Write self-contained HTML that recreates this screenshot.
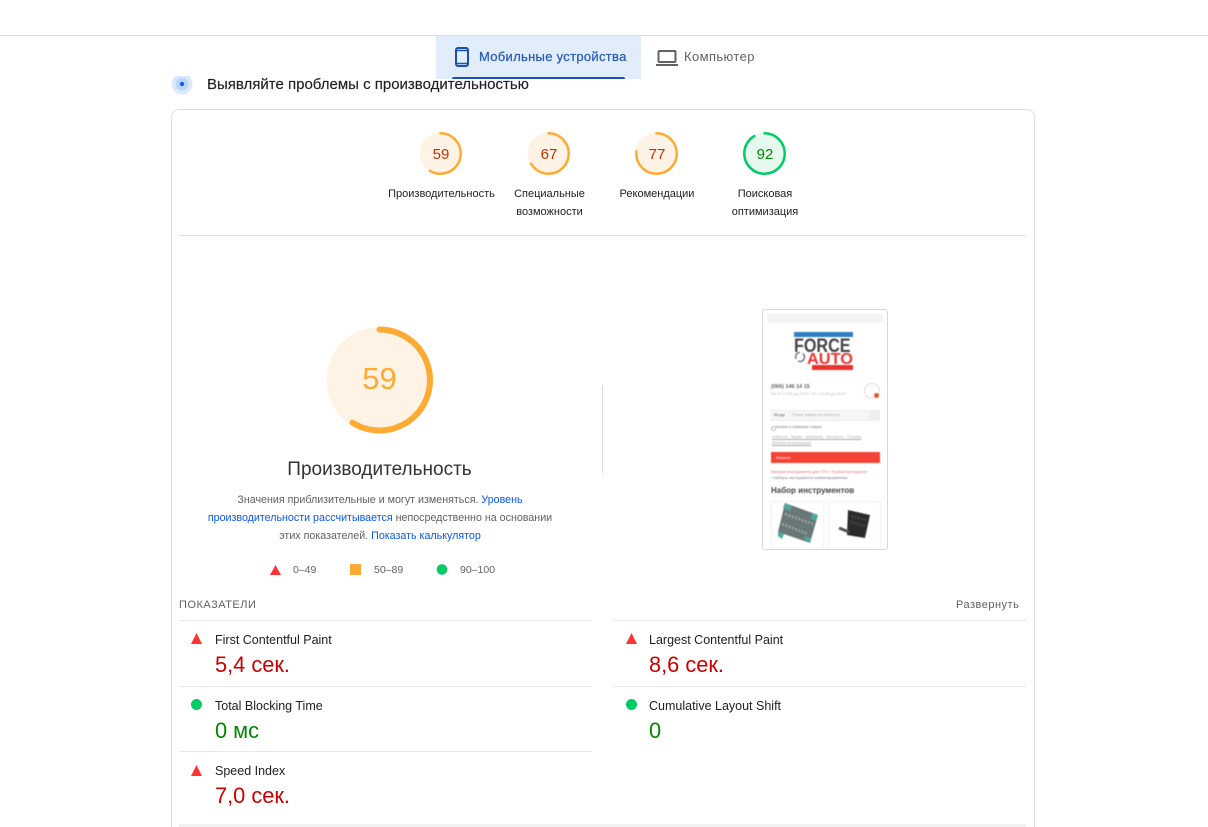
<!DOCTYPE html>
<html lang="ru"><head><meta charset="utf-8"><title>PageSpeed</title>
<style>
html,body{margin:0;padding:0;background:#fff;width:1208px;height:827px;overflow:hidden}
body{position:relative;font-family:"Liberation Sans",sans-serif;color:#212121}
.a{position:absolute;white-space:nowrap;line-height:1}
.c{transform:translateX(-50%)}
.h{position:absolute;height:1px;background:#e8e8e8}
.lab{font-size:11px;color:#212121}
.name{font-size:12.500px;color:#212121}
.red{font-size:21.800px;color:#c00}
.grn{font-size:21.800px;color:#080}
svg{position:absolute;overflow:visible}
a{color:#0b57f0;text-decoration:none}
</style></head><body>
<div class="h" style="left:0;top:35px;width:1208px;background:#dadce0"></div>

<div class="a" style="left:207px;top:77px;font-size:15px;color:#202124;-webkit-text-stroke:.15px #202124">Выявляйте проблемы с производительностью</div>
<svg style="left:168px;top:70px" width="28" height="28"><circle cx="14" cy="14" r="10.500" fill="#dbe9fc"/><circle cx="14" cy="14" r="6.500" fill="#bcd6fb"/><circle cx="14" cy="14" r="2.200" fill="#1a5fe0"/></svg>
<div style="position:absolute;left:0;top:36px;width:1208px;height:40px;background:#fff"></div>

<div style="position:absolute;left:436px;top:36px;width:205px;height:43px;background:#e1edfb"></div>
<div style="position:absolute;left:452px;top:77px;width:173px;height:2px;background:#1a50b0;border-radius:2px 2px 0 0"></div>
<svg style="left:454px;top:47px" width="16" height="20" viewBox="0 0 16 20"><rect x="2" y="1" width="12" height="18" rx="2" fill="none" stroke="#1a50b0" stroke-width="2"/><path d="M2 3.500H14M2 16.500H14" stroke="#1a50b0" stroke-width="1.500"/></svg>
<div class="a" style="left:479px;top:50px;font-size:13px;letter-spacing:.3px;color:#2a5cb5;-webkit-text-stroke:.25px #2a5cb5">Мобильные устройства</div>
<svg style="left:656px;top:50px" width="22" height="16" viewBox="0 0 22 16"><rect x="2.500" y="1" width="17" height="11" rx="1" fill="none" stroke="#5f6368" stroke-width="2"/><path d="M0 15H22" stroke="#5f6368" stroke-width="2"/></svg>
<div class="a" style="left:684px;top:50px;font-size:13px;color:#5f6368;letter-spacing:.4px">Компьютер</div>

<div style="position:absolute;left:171px;top:109px;width:862px;height:740px;border:1px solid #dadce0;border-radius:8px"></div>

<svg style="left:0;top:0" width="1208" height="827">
<g fill="#fff3e6">
<circle cx="440.500" cy="153.500" r="21"/><circle cx="548.500" cy="153.500" r="21"/><circle cx="656.500" cy="153.500" r="21"/><circle cx="379.500" cy="380" r="53"/></g>
<circle cx="764.500" cy="153.500" r="21" fill="#e6f9ef"/>
<g fill="none" stroke="#ffaa33" stroke-linecap="round">
<circle cx="440.500" cy="153.500" r="20.250" stroke-width="2.500" pathLength="100" stroke-dasharray="59 100" transform="rotate(-90 440.500 153.500)"/>
<circle cx="548.500" cy="153.500" r="20.250" stroke-width="2.500" pathLength="100" stroke-dasharray="67 100" transform="rotate(-90 548.500 153.500)"/>
<circle cx="656.500" cy="153.500" r="20.250" stroke-width="2.500" pathLength="100" stroke-dasharray="77 100" transform="rotate(-90 656.500 153.500)"/>
<circle cx="764.500" cy="153.500" r="20.250" stroke="#00cc66" stroke-width="2.500" pathLength="100" stroke-dasharray="92 100" transform="rotate(-90 764.500 153.500)"/>
<circle cx="379.500" cy="380" r="50.500" stroke-width="6" pathLength="100" stroke-dasharray="59 100" transform="rotate(-90 379.500 380)"/>
</g>
<polygon points="275.500,565 281,575 270,575" fill="#ff3333"/>
<rect x="350" y="564" width="11" height="11" fill="#ffaa33"/>
<circle cx="442" cy="569.500" r="5.300" fill="#00cc66"/>
<polygon points="196.500,633 202,644 191,644" fill="#ff3333"/>
<circle cx="196.500" cy="704.500" r="5.500" fill="#00cc66"/>
<polygon points="196.500,765 202,776 191,776" fill="#ff3333"/>
<polygon points="631.500,633 637,644 626,644" fill="#ff3333"/>
<circle cx="631.500" cy="704.500" r="5.500" fill="#00cc66"/>
</svg>

<div class="a c" style="left:441px;top:147px;font-size:15px;color:#c33300">59</div>
<div class="a c" style="left:549px;top:147px;font-size:15px;color:#c33300">67</div>
<div class="a c" style="left:657px;top:147px;font-size:15px;color:#c33300">77</div>
<div class="a c" style="left:765px;top:147px;font-size:15px;color:#080">92</div>

<div class="a c lab" style="left:441.500px;top:189px">Производительность</div>
<div class="a c lab" style="left:549.500px;top:189px">Специальные</div>
<div class="a c lab" style="left:549.500px;top:207px">возможности</div>
<div class="a c lab" style="left:657px;top:189px">Рекомендации</div>
<div class="a c lab" style="left:765px;top:189px">Поисковая</div>
<div class="a c lab" style="left:765px;top:207px">оптимизация</div>
<div class="h" style="left:179px;top:235px;width:847px;background:#e0e0e0"></div>

<div class="a c" style="left:379.500px;top:363px;font-size:31px;color:#ffaa33">59</div>
<div class="a c" style="left:379.500px;top:460px;font-size:19px;color:#333">Производительность</div>
<div class="a c" style="left:380px;top:495px;font-size:10.700px;color:#616161">Значения приблизительные и могут изменяться. <a>Уровень</a></div>
<div class="a c" style="left:380px;top:513px;font-size:10.700px;color:#616161"><a>производительности рассчитывается</a> непосредственно на основании</div>
<div class="a c" style="left:380px;top:531px;font-size:10.700px;color:#616161">этих показателей. <a>Показать калькулятор</a></div>
<div class="a" style="left:293px;top:565px;font-size:10.500px;color:#616161">0–49</div>
<div class="a" style="left:374px;top:565px;font-size:10.500px;color:#616161">50–89</div>
<div class="a" style="left:460px;top:565px;font-size:10.500px;color:#616161">90–100</div>

<div style="position:absolute;left:602px;top:385px;width:1px;height:88px;background:#dadce0"></div>
<div style="position:absolute;left:762px;top:309px;width:124px;height:239px;border:1px solid #d8d8d8;border-radius:3px;background:#fff;overflow:hidden">
 <div style="filter:blur(.5px);position:absolute;left:0;top:0;width:124px;height:239px">
 <div style="position:absolute;left:4px;top:4px;width:116px;height:9px;background:#f3f3f3"></div>
 <div style="position:absolute;left:31px;top:22px;width:59px;height:5px;background:#2c7fc4"></div>
 <div class="a" style="left:31px;top:27px;font-size:19px;font-weight:bold;color:#444;transform:scaleX(.85);transform-origin:0 0">FORCE</div>
 <div class="a" style="left:44px;top:42px;font-size:16px;font-weight:bold;color:#ee3333;transform:scaleX(1.02);transform-origin:0 0">AUTO</div>
 <svg style="left:31px;top:41px" width="12" height="12"><circle cx="6" cy="6" r="4.500" fill="none" stroke="#777" stroke-width="1.500" stroke-dasharray="9 3"/></svg>
 <div style="position:absolute;left:49px;top:55px;width:41px;height:5px;background:#e8332d"></div>
 <div class="a" style="left:8px;top:75px;font-size:5.500px;font-weight:bold;color:#666">(066) 146 14 15</div>
 <div class="a" style="left:8px;top:83px;font-size:3.800px;color:#bbb">Пн-Пт с 9:00 до 18:00, Сб с 10:00 до 15:00</div>
 <div style="position:absolute;left:101px;top:73px;width:14px;height:14px;border:1px solid #ddd;border-radius:50%"></div>
 <div style="position:absolute;left:111px;top:83px;width:5px;height:5px;border-radius:50%;background:#d9552b"></div>
 <div style="position:absolute;left:8px;top:100px;width:109px;height:11px;background:#f6f6f6;border:1px solid #ececec;box-sizing:border-box"></div>
 <div style="position:absolute;left:106px;top:100px;width:11px;height:11px;background:#eee"></div>
 <div class="a" style="left:11px;top:103px;font-size:4px;color:#666">Везде</div>
 <div class="a" style="left:29px;top:103px;font-size:4px;color:#aaa">Поиск товара по каталогу</div>
 <div style="position:absolute;left:8px;top:116px;width:3px;height:3px;border:.6px solid #bbb;border-radius:50%"></div>
 <div class="a" style="left:13px;top:116px;font-size:3.800px;color:#777">Искать в названии товара</div>
 <div class="a" style="left:9px;top:125px;font-size:4px;color:#aaa;text-decoration:underline">Новости &nbsp; Акции &nbsp; Шаблоны &nbsp; Контакты &nbsp; Отзывы</div>
 <div class="a" style="left:9px;top:131px;font-size:4px;color:#aaa;text-decoration:underline">Важная информация</div>
 <div style="position:absolute;left:8px;top:142px;width:109px;height:11px;background:#f44336"></div>
 <div class="a" style="left:13px;top:146px;font-size:4px;color:#fff">Каталог</div>
 <div class="a" style="left:8px;top:160px;font-size:4px;color:#e06a60">Магазин инструмента для СТО / Ручной инструмент</div>
 <div class="a" style="left:8px;top:166px;font-size:4px;color:#777">/ Наборы инструмента комбинированные</div>
 <div class="a" style="left:8px;top:177px;font-size:8px;font-weight:bold;color:#444">Набор инструментов</div>
 <div style="position:absolute;left:8px;top:191px;width:51px;height:48px;border:1px solid #f0f0f0"></div>
 <div style="position:absolute;left:65px;top:191px;width:51px;height:48px;border:1px solid #f0f0f0"></div>
 <svg style="left:0;top:0" width="124" height="239">
  <polygon points="22,193 55,205 47,233 15,222" fill="#6a7777"/>
  <polygon points="22,193 29,196 27,201 20,198" fill="#4fa79e"/>
  <polygon points="49,203 55,205 53,211 48,209" fill="#4fa79e"/>
  <polygon points="15,222 21,224 19,229 15,226" fill="#4fa79e"/>
  <polygon points="41,229 47,233 48,228 42,226" fill="#4fa79e"/>
  <path d="M22 204L50 214M19 214L45 224" stroke="#9aa5a5" stroke-width="2.500" stroke-dasharray="2 1.500"/>
  <polygon points="85,200 107,205 102,228 84,225" fill="#2b2b2b"/>
  <path d="M76 218L86 222" stroke="#555" stroke-width="3"/>
  <path d="M88 206L103 210M87 212L102 216" stroke="#4a4a4a" stroke-width="2" stroke-dasharray="2 1.500"/>
 </svg>
 </div>
</div>

<div class="a" style="left:179px;top:600px;font-size:11px;letter-spacing:.5px;color:#616161">ПОКАЗАТЕЛИ</div>
<div class="a" style="left:956px;top:600px;font-size:11px;letter-spacing:.5px;color:#616161">Развернуть</div>
<div class="h" style="left:179px;top:620px;width:413px"></div>
<div class="h" style="left:613px;top:620px;width:413px"></div>
<div class="h" style="left:179px;top:686px;width:413px"></div>
<div class="h" style="left:613px;top:686px;width:413px"></div>
<div class="h" style="left:179px;top:751px;width:413px"></div>

<div class="a name" style="left:215px;top:634px">First Contentful Paint</div>
<div class="a red" style="left:215px;top:654px">5,4 сек.</div>
<div class="a name" style="left:215px;top:700px">Total Blocking Time</div>
<div class="a grn" style="left:215px;top:720px">0 мс</div>
<div class="a name" style="left:215px;top:765px">Speed Index</div>
<div class="a red" style="left:215px;top:785px">7,0 сек.</div>
<div class="a name" style="left:649px;top:634px">Largest Contentful Paint</div>
<div class="a red" style="left:649px;top:654px">8,6 сек.</div>
<div class="a name" style="left:649px;top:700px">Cumulative Layout Shift</div>
<div class="a grn" style="left:649px;top:720px">0</div>
<div style="position:absolute;left:179px;top:824px;width:847px;height:3px;background:#f1f1f1"></div>
</body></html>
